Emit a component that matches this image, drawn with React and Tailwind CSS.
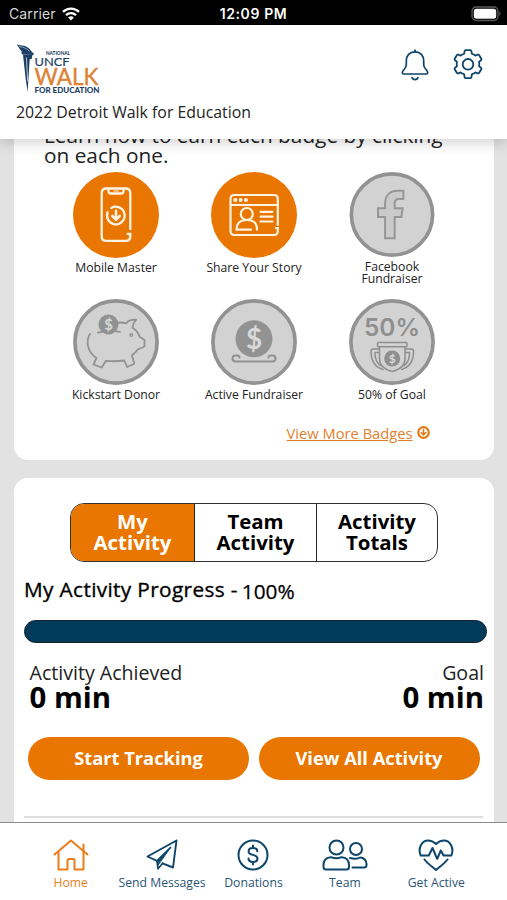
import React from "react";

function WifiSVG() {
  return (
    <svg width="18" height="14" viewBox="0 0 18 14" fill="none" stroke="#fff" strokeWidth="2.3">
      <path d="M1 4.8a11.6 11.6 0 0 1 16 0" />
      <path d="M4 8.1a7.2 7.2 0 0 1 10 0" />
      <path d="M9 13.6 6.1 10.6a4.2 4.2 0 0 1 5.8 0z" fill="#fff" stroke="none" />
    </svg>
  );
}

function BatterySVG() {
  return (
    <svg width="31" height="16" viewBox="0 0 31 16">
      <rect x="1" y="1" width="26" height="13.5" rx="4.2" fill="none" stroke="#5c5c5c" strokeWidth="1.3" />
      <rect x="2.8" y="2.8" width="22.4" height="9.9" rx="2.6" fill="#fff" />
      <path d="M28.3 5.6c1.6.6 1.6 3.8 0 4.400z" fill="#5c5c5c" />
    </svg>
  );
}

function Logo() {
  return (
    <svg width="86" height="52" viewBox="0 0 86 52" fontFamily="Lato, sans-serif">
      <path d="M.5 1.5c3 1.200 7 .4 10.500 2.400 3 1.500 3.500 4 5.800 5.600-3.600 1-7.500.8-10.300-.8C3.300 6.900 3.300 4.200.5 1.500z" fill="#1d3f66" />
      <path d="M5 8.600l13 1.300-.8 2-11-.4z" fill="#1d3f66" />
      <path d="M7 11.800l9.500.3-.8 3.600-2 .6L11.600 49 9.700 36z" fill="#1d3f66" />
      <path d="M10.400 14.500l1.300 24" stroke="#dfe6ee" strokeWidth=".8" />
      <path d="M3 3.500c4 .6 7.500 1.500 10.500 4.800" stroke="#b8c7d6" strokeWidth=".7" fill="none" />
      <text x="30" y="12" fontSize="5" fontWeight="900" fill="#1d3f66" textLength="24" lengthAdjust="spacingAndGlyphs">NATIONAL</text>
      <text x="18.500" y="23.300" fontSize="12" fill="#1d3f66" stroke="#1d3f66" strokeWidth=".2" textLength="35" lengthAdjust="spacingAndGlyphs">UNCF</text>
      <text x="18.500" y="42.300" fontSize="23.500" fill="#dd8436" stroke="#dd8436" strokeWidth=".4" textLength="64" lengthAdjust="spacingAndGlyphs">WALK</text>
      <text x="18.500" y="49.600" fontSize="7.200" fontWeight="900" fill="#1d3f66" textLength="65" lengthAdjust="spacingAndGlyphs">FOR EDUCATION</text>
    </svg>
  );
}

function BellSVG() {
  return (
    <svg width="28" height="32" viewBox="0 0 28 32" fill="none" stroke="#0d456b" strokeWidth="1.700" strokeLinecap="round" strokeLinejoin="round">
      <path d="M14 1.200v1.600" />
      <path d="M14 2.800c-5.500 0-8.700 4-8.700 9v4c0 4-4 5.200-4 8 0 .8.500 1.200 1.300 1.200h22.800c.8 0 1.300-.4 1.300-1.200 0-2.800-4-4-4-8v-4c0-5-3.200-9-8.700-9z" />
      <path d="M11 28.500c.8 2.700 5.200 2.700 6 0" />
    </svg>
  );
}

function GearSVG() {
  return (
    <svg width="32" height="32" viewBox="0 0 32 32" fill="none" stroke="#0d456b" strokeWidth="1.800" strokeLinejoin="round">
      <path d="M12.600 2.200q.2-1 1.200-1h4.400q1 0 1.200 1l.4 2.400q2 .7 3.600 2l2.300-.9q1-.4 1.500.5l2.100 3.600q.5.900-.3 1.500l-1.900 1.500q.4 2.200 0 4.400l1.900 1.500q.8.600.3 1.500l-2.100 3.600q-.5.900-1.500.5l-2.300-.9q-1.600 1.300-3.600 2l-.4 2.800q-.2 1-1.200 1h-4.400q-1 0-1.200-1l-.4-2.800q-2-.7-3.600-2l-2.300.9q-1 .4-1.500-.5l-2.100-3.600q-.5-.9.300-1.500l1.900-1.500q-.4-2.200 0-4.400L3 11.300q-.8-.6-.3-1.500l2.100-3.600q.5-.9 1.500-.5l2.300.9q1.600-1.300 3.600-2z" />
      <circle cx="16" cy="15.300" r="5.300" />
    </svg>
  );
}

function MobileBadge() {
  return (
    <svg width="86" height="86" viewBox="0 0 86 86" fill="none" stroke="#fff3e3" strokeWidth="2.300" strokeLinecap="round">
      <circle cx="43" cy="43" r="43" fill="#e97600" stroke="none" />
      <path d="M57.300 57V21.200q0-4.700-4.700-4.700H33.400q-4.700 0-4.700 4.700v43q0 4.700 4.700 4.700h19.200q4.700 0 4.700-4.700V62h-2.600" />
      <path d="M35.500 17v2.200q0 2.300 2.300 2.300h10.400q2.300 0 2.300-2.300V17" />
      <path d="M41 19h4.500" strokeWidth="1.200" />
      <path d="M34.700 40.200A8.800 8.800 0 1 0 38.300 36" />
      <path d="M43 38.700v8M39.300 44l3.700 3.700 3.700-3.700" strokeWidth="2.600" />
    </svg>
  );
}

function StoryBadge() {
  return (
    <svg width="86" height="86" viewBox="0 0 86 86" fill="none" stroke="#fff3e3" strokeWidth="2.200" strokeLinecap="round">
      <circle cx="43" cy="43" r="43" fill="#e97600" stroke="none" />
      <path d="M66.800 53V27q0-4-4-4H23.500q-4 0-4 4v32q0 4 4 4h39.300q4 0 4-4v-3h-2" />
      <path d="M20 33h46" />
      <path d="M24.200 28h.2M29.500 28h.2M34.800 28h.2" strokeWidth="3.800" />
      <circle cx="35.800" cy="42" r="6" />
      <path d="M40 57.700H25.600c0-8 4.400-9.700 10.200-9.700 6 0 10.200 1.700 10.200 9.700" />
      <path d="M49.500 39.800h12M49.500 44.700h12M49.500 49.500h12" />
    </svg>
  );
}

function GreyCircle() {
  return <circle cx="43" cy="43" r="41.100" fill="#d2d2d2" stroke="#929292" strokeWidth="3.700" />;
}

function FacebookBadge() {
  return (
    <svg width="86" height="86" viewBox="0 0 86 86">
      <GreyCircle />
      <path d="M36 67V45.500h-7.200v-8.800H36v-4.500C36 23.500 41 19 48.500 19h6v8.300h-4.300c-3.200 0-4.500 1.700-4.500 4.500v4.900h8l-1.200 8.800h-6.800V67z" fill="#cacaca" stroke="#969696" strokeWidth="2" />
    </svg>
  );
}

function PiggyBadge() {
  return (
    <svg width="86" height="86" viewBox="0 0 86 86" fill="none" stroke="#929292" strokeWidth="1.800" strokeLinecap="round" strokeLinejoin="round">
      <GreyCircle />
      <path d="M17 35c-4 6-3.500 17.500 6.500 24l-3 6.500 8.200 3 4.200-6.700q9 1 18.500-.3l2.700 6.500 7.200-3.200-2.400-8.300q4-3.500 5.800-6l5.800-2.500q1-.5 1-1.700v-5.500l-4.700-2.800q-2.300-6.500-7.300-9.300.5-4.700 3.700-8-6.700-.5-10.200 3.700-4.500-1.500-9-.5" />
      <path d="M25 33.600q10-3.200 22-.7" />
      <circle cx="58.300" cy="36" r="1.300" strokeWidth="1.300" />
      <circle cx="35.500" cy="25.500" r="10" fill="#929292" stroke="none" />
      <text x="35.500" y="31" textAnchor="middle" fontFamily="Lato, sans-serif" fontSize="15" fontWeight="700" fill="#d8d8d8" stroke="none">$</text>
    </svg>
  );
}

function CoinBadge() {
  return (
    <svg width="86" height="86" viewBox="0 0 86 86" fill="none" stroke="#929292" strokeWidth="2" strokeLinecap="round" strokeLinejoin="round">
      <GreyCircle />
      <path d="M28.500 58.500q0-2-2-2h-2q-3 0-3 3t3 3h37q3 0 3-3t-3-3h-2q-2 0-2 2" />
      <circle cx="43" cy="39.800" r="18.500" fill="#929292" stroke="none" />
      <text x="43" y="50" textAnchor="middle" fontFamily="Lato, sans-serif" fontSize="28" fontWeight="700" fill="#d8d8d8" stroke="none">$</text>
    </svg>
  );
}

function GoalBadge() {
  return (
    <svg width="86" height="86" viewBox="0 0 86 86" fill="none" stroke="#8f8f8f" strokeWidth="1.500" strokeLinecap="round" strokeLinejoin="round">
      <GreyCircle />
      <text x="15" y="37" fontFamily="Inter, sans-serif" fontSize="24" fontWeight="600" fill="#8f8f8f" stroke="none" textLength="56" lengthAdjust="spacingAndGlyphs">50%</text>
      <path d="M29.500 43.500H57q1 0 1 1v2.200q0 1-1 1H29.500q-1 0-1-1v-2.200q0-1 1-1z" />
      <path d="M30.500 48v12c0 6.500 5 10.500 12.700 12.500C51 70.500 56 66.500 56 60V48" />
      <path d="M30 50h-6q-2 0-2 2.500c0 9 3.500 15.500 12 18M56.500 50h6q2 0 2 2.500c0 9-3.500 15.500-12 18" />
      <path d="M30 53.500h-4c0 6 1.500 10.500 5.500 13M56.500 53.500h4c0 6-1.500 10.500-5.500 13" />
      <circle cx="43.200" cy="59.500" r="8" fill="#8f8f8f" stroke="none" />
      <text x="43.200" y="64" textAnchor="middle" fontFamily="Lato, sans-serif" fontSize="12" fontWeight="700" fill="#d8d8d8" stroke="none">$</text>
    </svg>
  );
}

function HomeSVG() {
  return (
    <svg width="36" height="32" viewBox="0 0 36 32" fill="none" stroke="#e97d1c" strokeWidth="2" strokeLinecap="round" strokeLinejoin="round">
      <path d="M1.500 15.500 18 1.500l16.500 14" />
      <path d="M5.500 12.500v18h9v-9q0-1.500 1.500-1.500h4q1.500 0 1.500 1.500v9h9v-18" />
      <path d="M30.500 11.500v-6" />
    </svg>
  );
}

function SendSVG() {
  return (
    <svg width="32" height="32" viewBox="0 0 32 32" fill="none" stroke="#0d456b" strokeWidth="1.900" strokeLinecap="round" strokeLinejoin="round">
      <path d="M30.500 1.500 1.500 17.500l9.500 4.300M30.500 1.500 27 28.500l-10.500-4.200" />
      <path d="M24.500 8.500 11 21.800l1 8 4.700-5.500" strokeWidth="1.700" />
      <path d="M24.500 8.500 11 21.800l1 4z" fill="#0d456b" strokeWidth="1" />
    </svg>
  );
}

function DollarSVG() {
  return (
    <svg width="32" height="32" viewBox="0 0 32 32" fill="none" stroke="#0d456b" strokeWidth="2" strokeLinecap="round">
      <circle cx="16" cy="16" r="14.500" />
      <path d="M20.300 12.200c0-2-1.700-3.200-4.300-3.200s-4.400 1.200-4.400 3.400c0 4.600 8.900 2.400 8.900 7.100 0 2.200-1.900 3.500-4.500 3.500s-4.500-1.300-4.500-3.400M16 6.500v2.300M16 23.200v2.300" />
    </svg>
  );
}

function TeamSVG() {
  return (
    <svg width="46" height="32" viewBox="0 0 46 32" fill="none" stroke="#0d456b" strokeWidth="2" strokeLinecap="round" strokeLinejoin="round">
      <circle cx="14.500" cy="8.500" r="7" />
      <path d="M9 18.200c-5 0-7.500 3.500-7.500 8V28q0 2.500 2.500 2.500h20.500q2.500 0 2.500-2.500v-1.800c0-4.500-2.500-8-7.500-8q-5 2.300-10.500 0z" />
      <circle cx="34" cy="10" r="6" />
      <path d="M28 19c4 1 8.500.5 10-.5 4 0 6.500 3.200 6.500 6.500v1q0 2.500-2.500 2.500H30.500" />
    </svg>
  );
}

function HeartSVG() {
  return (
    <svg width="36" height="32" viewBox="0 0 36 32" fill="none" stroke="#0d456b" strokeWidth="2" strokeLinecap="round" strokeLinejoin="round">
      <path d="M2.700 16.500C-.5 9 4 1.500 10 1.500c4 0 6.500 2 8 3.500 1.500-1.500 4-3.500 8-3.500 6 0 10.500 7.500 7.300 15h-7.800l-2.700-5-3.600 8.300L14.500 9l-3.700 7.500z" />
      <path d="M6.500 20.500c3 4 7.500 7 11.500 10.500 4-3.500 8.500-6.500 11.500-10.500" />
    </svg>
  );
}

function ArrowDownSVG() {
  return (
    <svg width="13" height="13" viewBox="0 0 13 13" fill="none" stroke="#e07a18" strokeWidth="2.200">
      <circle cx="6.500" cy="6.500" r="5.300" />
      <path d="M6.500 3v5.500M3.800 6.200l2.700 2.700 2.700-2.700" strokeWidth="1.600" />
    </svg>
  );
}

const badges = [
  { label: "Mobile Master", icon: <MobileBadge /> },
  { label: "Share Your Story", icon: <StoryBadge /> },
  { label: "Facebook Fundraiser", icon: <FacebookBadge /> },
  { label: "Kickstart Donor", icon: <PiggyBadge /> },
  { label: "Active Fundraiser", icon: <CoinBadge /> },
  { label: "50% of Goal", icon: <GoalBadge /> },
];

const navItems = [
  { label: "Home", icon: <HomeSVG />, active: true },
  { label: "Send Messages", icon: <SendSVG /> },
  { label: "Donations", icon: <DollarSVG /> },
  { label: "Team", icon: <TeamSVG /> },
  { label: "Get Active", icon: <HeartSVG /> },
];

function StatusBar() {
  return (
    <div className="h-[25px] shrink-0 bg-black text-white grid grid-cols-3 items-center pl-[9px] pr-[9px] pt-[2px] font-['Inter',sans-serif] text-[14px]">
      <div className="flex items-center gap-[6px] text-[#d9d9d9] tracking-[0.1px]">Carrier <WifiSVG /></div>
      <div className="text-center font-semibold text-[14px] tracking-[0.6px] whitespace-nowrap">12:09 PM</div>
      <div className="flex justify-end -mr-[4px]"><BatterySVG /></div>
    </div>
  );
}

function Header() {
  return (
    <header className="relative z-10 h-[114px] shrink-0 bg-white px-4 shadow-[0_2px_14px_rgba(0,0,0,0.22)]">
      <div className="flex justify-between pt-[18px]">
        <Logo />
        <div className="flex gap-[23px] pt-[6px] pr-[7.5px]">
          <BellSVG />
          <GearSVG />
        </div>
      </div>
      <h1 className="mt-[7px] text-[15.85px] leading-[20px] text-[#222] whitespace-nowrap">2022 Detroit Walk for Education</h1>
    </header>
  );
}

function BadgesCard() {
  return (
    <section className="h-[321px] bg-white rounded-b-[14px] px-[33px]">
      <p className="-mt-[14px] -mr-5 ml-[-2.5px] text-[20.8px] leading-[20px] text-[#222] whitespace-nowrap">
        Learn how to earn each badge by clicking<br />on each one.
      </p>
      <div className="mt-[6.5px] grid grid-cols-3 gap-y-[13.5px]">
        {badges.map((b) => (
          <div key={b.label} className="flex flex-col items-center h-[113.5px]">
            {b.icon}
            <span className="mt-[4.5px] pl-px w-[100px] text-center text-[12.2px] leading-[12px] text-[#222]">{b.label}</span>
          </div>
        ))}
      </div>
      <div className="mt-[10.5px] mr-[31px] flex items-center justify-end gap-[4px] text-[#e2802c] text-[14.7px] leading-[20px]">
        <a className="underline">View More Badges</a>
        <ArrowDownSVG />
      </div>
    </section>
  );
}

function ActivityCard() {
  return (
    <section className="mt-[18px] h-[400px] bg-white rounded-t-[14px] pt-[25px] px-[10.5px] text-black">
      <div className="ml-[46px] w-[368px] h-[59px] grid grid-cols-[124px_122px_1fr] border border-[#333] rounded-[14px] overflow-hidden text-[20.4px] leading-[21px] font-bold text-center divide-x divide-[#222]">
        <button className="bg-[#e97600] text-white pb-[1px]">My<br />Activity</button>
        <button className="pb-[1px]">Team<br />Activity</button>
        <button className="pb-[1px]">Activity<br />Totals</button>
      </div>
      <div className="mt-[13px] flex gap-[4px] text-[20.8px] leading-[28px] font-medium whitespace-nowrap [-webkit-text-stroke:0.35px_#000]">
        <h2 className="font-medium tracking-[0.35px]">My Activity Progress -</h2>
        <span className="pt-[2px] [-webkit-text-stroke:0.25px_#000]">100%</span>
      </div>
      <div className="mt-[15px] w-[463px] h-[23px] rounded-full bg-[#003b5c] border border-[#17212b]" />
      <div className="mt-[17px] pl-[5.5px] -mr-px flex justify-between text-[19.6px] leading-[25px] text-[#222]">
        <div>
          <div>Activity Achieved</div>
          <div className="font-bold text-[29.400px] leading-[25px] text-black">0 min</div>
        </div>
        <div className="text-right">
          <div>Goal</div>
          <div className="font-bold text-[29.400px] leading-[25px] text-black">0 min</div>
        </div>
      </div>
      <div className="mt-[27px] pl-[4px] flex gap-[9.5px] text-[18.3px] font-bold text-white">
        <button className="w-[221px] h-[43px] pb-px rounded-full bg-[#e97600]">Start Tracking</button>
        <button className="w-[221px] h-[43px] pb-px rounded-full bg-[#e97600]">View All Activity</button>
      </div>
      <hr className="mt-[36px] border-t-2 border-[#dedede]" />
    </section>
  );
}

function BottomNav() {
  return (
    <nav className="h-[78px] shrink-0 bg-white border-t border-[#8c8c8c] grid grid-cols-5 px-[25px]">
      {navItems.map((n) => (
        <a key={n.label} className={n.active ? "flex flex-col items-center pt-[16px] text-[#e97d1c]" : "flex flex-col items-center pt-[16px] text-[#2a5575]"}>
          {n.icon}
          <span className="mt-[3.5px] text-[12.2px] leading-[16px] whitespace-nowrap">{n.label}</span>
        </a>
      ))}
    </nav>
  );
}

export default function App() {
  return (
    <div className="w-[507px] h-[900px] flex flex-col overflow-hidden bg-[#e2e2e2] font-['Open_Sans',sans-serif]">
      <StatusBar />
      <Header />
      <main className="flex-1 min-h-0 overflow-hidden px-[13.5px] flow-root">
        <div className="flex flex-col">
          <BadgesCard />
          <ActivityCard />
        </div>
      </main>
      <BottomNav />
    </div>
  );
}
